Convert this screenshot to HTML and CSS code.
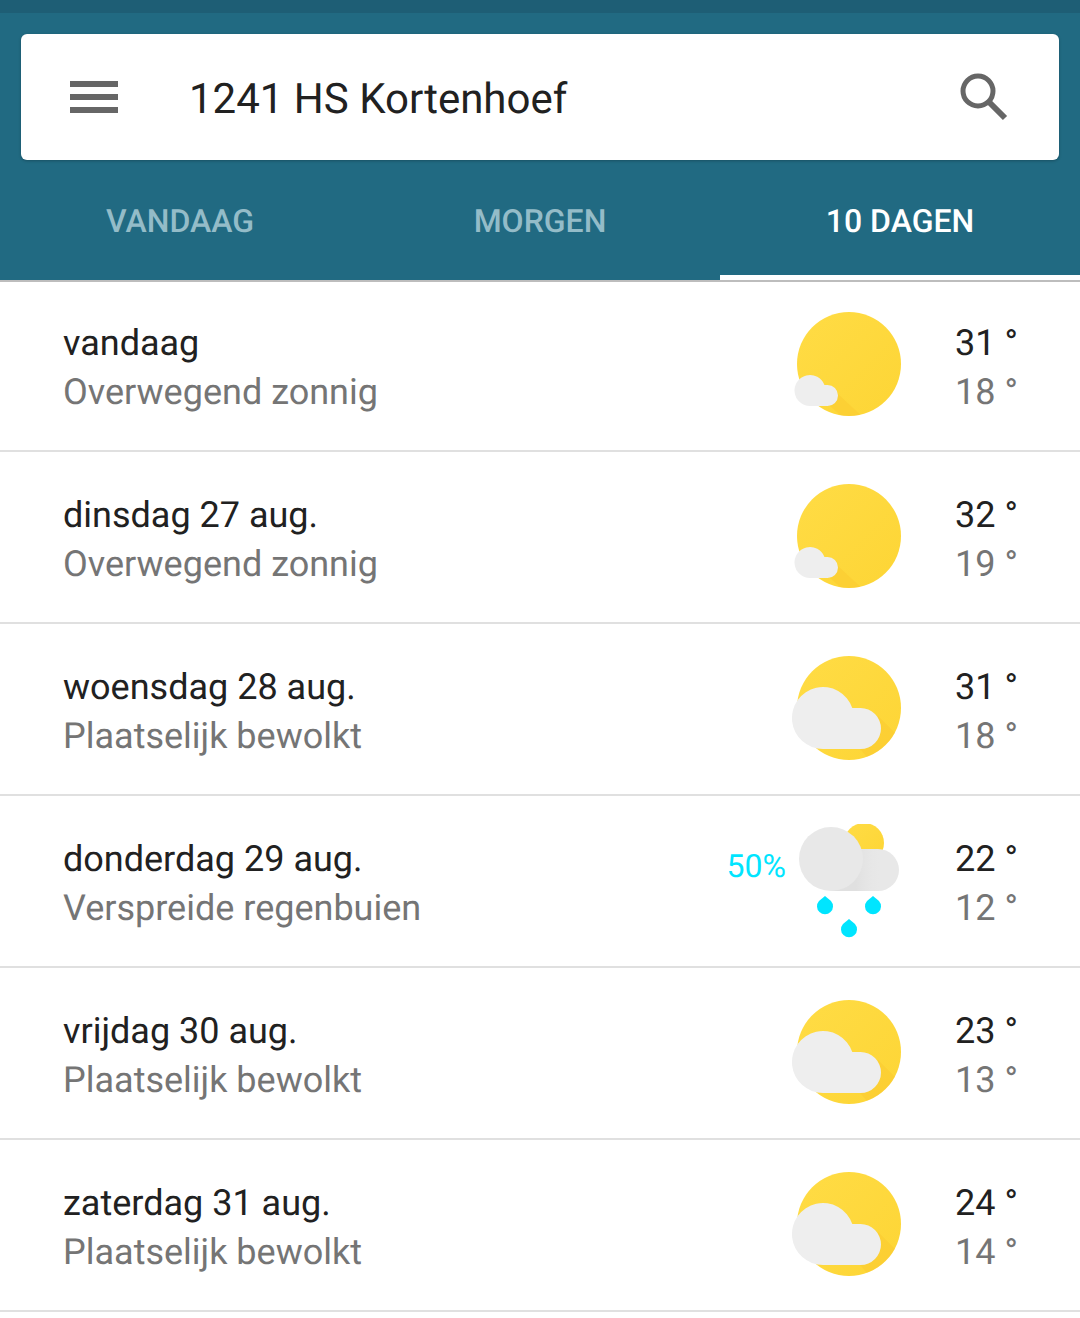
FILE: index.html
```html
<!DOCTYPE html>
<html lang="nl">
<head>
  <meta charset="UTF-8" />
  <meta name="viewport" content="width=device-width, initial-scale=1.0"/>
  <title>Weer</title>
  <link rel="stylesheet" href="styles.css">
</head>
<body>
  <svg class="sprite" width="0" height="0" aria-hidden="true">
    <defs>
      <linearGradient id="sun-fill" x1="0" y1="0" x2="1" y2="1">
        <stop offset="0" stop-color="#ffdc45"/>
        <stop offset="1" stop-color="#fdd535"/>
      </linearGradient>
      <linearGradient id="cloud-shade" gradientUnits="userSpaceOnUse" x1="66" y1="40" x2="92" y2="40">
        <stop offset="0" stop-color="#e0e0e0"/>
        <stop offset="1" stop-color="#e8e8e8" stop-opacity="0"/>
      </linearGradient>
      <clipPath id="sun-clip"><circle cx="59" cy="56" r="52"/></clipPath>
      <symbol id="sun-small-cloud" viewBox="0 0 112 112">
        <circle cx="59" cy="56" r="52" fill="url(#sun-fill)"/>
        <polygon points="40,98 48,86 76,112 56,112" fill="#f9c62c" opacity=".4" clip-path="url(#sun-clip)"/>
        <path d="M20 98a15.5 15.5 0 1 1 14.5-21H37.5a10.5 10.5 0 0 1 0 21Z" fill="#eeeeee"/>
      </symbol>
      <symbol id="sun-big-cloud" viewBox="0 0 112 112">
        <circle cx="59" cy="56" r="52" fill="url(#sun-fill)"/>
        <polygon points="70,97 88,64 120,96 90,120" fill="#f9c62c" opacity=".4" clip-path="url(#sun-clip)"/>
        <path d="M33 97a31 31 0 1 1 29.3-41H70.5a20.5 20.5 0 0 1 0 41Z" fill="#eeeeee"/>
      </symbol>
      <symbol id="rain" viewBox="0 0 112 128">
        <circle cx="74" cy="19" r="20" fill="url(#sun-fill)"/>
        <path d="M41 67H88a21 21 0 0 0 0-42H41Z" fill="#e8e8e8"/>
        <path d="M41 67H88a21 21 0 0 0 0-42H41Z" fill="url(#cloud-shade)"/>
        <circle cx="41" cy="35" r="32" fill="#e8e8e8"/>
        <path d="M35 72l6 5a8 8 0 1 1-12 0Z" fill="#00e5ff"/>
        <path d="M83 72l6 5a8 8 0 1 1-12 0Z" fill="#00e5ff"/>
        <path d="M59 95l6 5a8 8 0 1 1-12 0Z" fill="#00e5ff"/>
      </symbol>
    </defs>
  </svg>

  <header class="top">
    <div class="statusbar"></div>
    <div class="searchbar">
      <svg class="menu-icon" width="48" height="32" viewBox="0 0 48 32">
        <path d="M0 0h48v6H0zM0 13h48v6H0zM0 26h48v6H0z" fill="#666"/>
      </svg>
      <span class="location">1241 HS Kortenhoef</span>
      <svg class="search-icon" width="48" height="48" viewBox="0 0 48 48">
        <circle cx="18" cy="18" r="15" fill="none" stroke="#666" stroke-width="5"/>
        <path d="M29 29l16 16" fill="none" stroke="#666" stroke-width="6"/>
      </svg>
    </div>
    <nav class="tabs">
      <a class="tab">VANDAAG</a>
      <a class="tab">MORGEN</a>
      <a class="tab active">10 DAGEN</a>
    </nav>
  </header>

  <main class="days">
    <div class="day">
      <div class="info"><div class="title">vandaag</div><div class="sub">Overwegend zonnig</div></div>
      <svg class="icon"><use href="#sun-small-cloud"/></svg>
      <div class="temps"><div class="title">31 °</div><div class="sub">18 °</div></div>
    </div>
    <div class="day">
      <div class="info"><div class="title">dinsdag 27 aug.</div><div class="sub">Overwegend zonnig</div></div>
      <svg class="icon"><use href="#sun-small-cloud"/></svg>
      <div class="temps"><div class="title">32 °</div><div class="sub">19 °</div></div>
    </div>
    <div class="day">
      <div class="info"><div class="title">woensdag 28 aug.</div><div class="sub">Plaatselijk bewolkt</div></div>
      <svg class="icon"><use href="#sun-big-cloud"/></svg>
      <div class="temps"><div class="title">31 °</div><div class="sub">18 °</div></div>
    </div>
    <div class="day">
      <div class="info"><div class="title">donderdag 29 aug.</div><div class="sub">Verspreide regenbuien</div></div>
      <span class="chance">50%</span>
      <svg class="icon icon-rain"><use href="#rain"/></svg>
      <div class="temps"><div class="title">22 °</div><div class="sub">12 °</div></div>
    </div>
    <div class="day">
      <div class="info"><div class="title">vrijdag 30 aug.</div><div class="sub">Plaatselijk bewolkt</div></div>
      <svg class="icon"><use href="#sun-big-cloud"/></svg>
      <div class="temps"><div class="title">23 °</div><div class="sub">13 °</div></div>
    </div>
    <div class="day">
      <div class="info"><div class="title">zaterdag 31 aug.</div><div class="sub">Plaatselijk bewolkt</div></div>
      <svg class="icon"><use href="#sun-big-cloud"/></svg>
      <div class="temps"><div class="title">24 °</div><div class="sub">14 °</div></div>
    </div>
  </main>
</body>
</html>
```

FILE: styles.css
```css
body, html {
  margin: 0;
  padding: 0;
  background-color: white;
  font-family: Roboto, sans-serif;
  text-rendering: geometricPrecision;
  overflow: hidden;
}

.sprite {
  position: absolute;
}

.top {
  background-color: #216a82;
  height: 280px;
  border-bottom: 2px solid #bdbdbd;
}

.statusbar {
  background-color: #1e5e75;
  height: 13px;
}

.searchbar {
  display: flex;
  align-items: center;
  height: 126px;
  margin: 21px 21px 0;
  padding: 0 51px 0 49px;
  background-color: white;
  border-radius: 6px;
  box-shadow: 0 1px 3px rgba(0, 0, 0, 0.25);
}

.location {
  flex-grow: 1;
  margin-left: 71px;
  padding-top: 5px;
  font-size: 42px;
  color: #212121;
}

.tabs {
  display: grid;
  grid-template-columns: repeat(3, 1fr);
  height: 120px;
}

.tab {
  display: flex;
  align-items: center;
  justify-content: center;
  padding-top: 2px;
  font-size: 32px;
  font-weight: 500;
  color: #94bcc8;
}

.tab.active {
  color: white;
  position: relative;
}

.tab.active::after {
  content: "";
  position: absolute;
  left: 0;
  right: 0;
  bottom: 0;
  height: 5px;
  background-color: white;
}

.days {
  margin-top: -2px;
}

.day {
  display: flex;
  align-items: center;
  height: 164px;
  padding: 6px 0 0 63px;
  border-bottom: 2px solid #e0e0e0;
}

.info {
  flex-grow: 1;
}

.title {
  font-size: 36px;
  line-height: 49px;
  color: #212121;
}

.sub {
  font-size: 36px;
  line-height: 49px;
  color: #757575;
}

.chance {
  margin: 0 4px 36px 0;
  font-size: 32px;
  color: #00e5ff;
}

.icon {
  width: 112px;
  height: 112px;
  margin: 0 53px 8px 0;
}

.icon-rain {
  height: 128px;
  margin: 8px 53px 0 0;
}

.temps {
  width: 125px;
}
```
